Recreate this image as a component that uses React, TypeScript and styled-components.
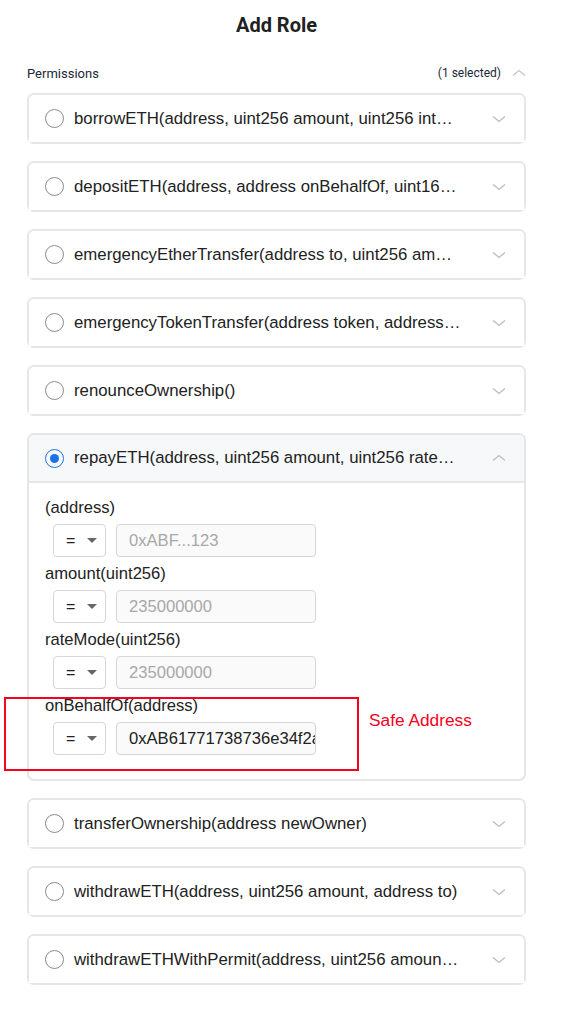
import { FC } from 'react';
import styled, { createGlobalStyle } from 'styled-components';

const Global = createGlobalStyle`
  body {
    margin: 0;
    background: #ffffff;
    font-family: "Liberation Sans", Arial, sans-serif;
  }
`;

const Page = styled.div`
  position: relative;
  width: 499px;
  padding: 0 35px 40px 27px;
`;

const Title = styled.h1`
  margin: 0;
  padding-top: 12px;
  height: 38px;
  text-align: center;
  font-family: Roboto, "Liberation Sans", sans-serif;
  font-size: 20px;
  font-weight: 700;
  color: #212121;
  line-height: 26px;
`;

const SectionHead = styled.div`
  display: flex;
  align-items: center;
  justify-content: space-between;
  height: 40px;
  padding-top: 3px;
  font-family: Roboto, "Liberation Sans", sans-serif;
  color: #1b2836;
`;

const SectionTitle = styled.div`
  font-size: 13px;
`;

const Selected = styled.div`
  display: flex;
  align-items: center;
  gap: 11px;
  font-size: 12px;
`;

const List = styled.div`
  display: flex;
  flex-direction: column;
  gap: 17px;
`;

const Card = styled.div`
  border: 2px solid #e6e6e6;
  border-radius: 7px;
  background: #fff;
`;

const Header = styled.div<{ $open?: boolean }>`
  display: flex;
  align-items: center;
  height: ${(p) => (p.$open ? '46px' : '47px')};
  padding: 0 18px 0 16px;
  background: ${(p) => (p.$open ? '#f7f8fa' : '#fff')};
  border-bottom: ${(p) => (p.$open ? '2px solid #e6e6e6' : 'none')};
  border-radius: 5px 5px 0 0;
`;

const Radio = styled.span<{ $on?: boolean }>`
  display: flex;
  align-items: center;
  justify-content: center;
  flex: none;
  width: 17px;
  height: 17px;
  border-radius: 50%;
  border: 1px solid ${(p) => (p.$on ? '#1a73e8' : '#8a8a8a')};
  margin-right: 10px;

  &::after {
    content: '';
    display: ${(p) => (p.$on ? 'block' : 'none')};
    width: 9px;
    height: 9px;
    border-radius: 50%;
    background: #1a73e8;
  }
`;

const Name = styled.div`
  width: 387px;
  overflow: hidden;
  white-space: nowrap;
  text-overflow: ellipsis;
  font-size: 16.8px;
  color: #222;
`;

const Chevron = styled.span<{ $light?: boolean }>`
  margin-left: auto;
  display: flex;
  color: ${(p) => (p.$light ? '#c4c4c4' : '#bdbdbd')};
`;

const Body = styled.div`
  display: flex;
  flex-direction: column;
  padding: 14px 16px 18px;
`;

const Field = styled.div`
  display: flex;
  flex-direction: column;
`;

const Label = styled.div`
  font-size: 16.6px;
  line-height: 22px;
  color: #222;
  margin-bottom: 5px;
`;

const Controls = styled.div`
  display: flex;
  gap: 10px;
  padding-left: 8px;
  margin-bottom: 6px;
`;

const Select = styled.div`
  display: flex;
  align-items: center;
  justify-content: space-between;
  box-sizing: border-box;
  width: 53px;
  height: 33px;
  padding: 0 8px 0 12px;
  border: 1px solid #d6d6d6;
  border-radius: 4px;
  font-size: 16px;
  color: #222;
`;

const Caret = styled.span`
  width: 0;
  height: 0;
  border-left: 5px solid transparent;
  border-right: 5px solid transparent;
  border-top: 5px solid #666;
`;

const Input = styled.div<{ $filled?: boolean }>`
  box-sizing: border-box;
  width: 200px;
  height: 33px;
  padding: 0 12px;
  border: 1px solid #d6d6d6;
  border-radius: 4px;
  background: #fafafa;
  font-size: 16.6px;
  line-height: 31px;
  white-space: nowrap;
  overflow: hidden;
  color: ${(p) => (p.$filled ? '#222' : '#a8a8a8')};
`;

const Highlight = styled.div`
  position: absolute;
  left: 4px;
  top: 697px;
  width: 351px;
  height: 70px;
  border: 2px solid #f5001e;
`;

const Note = styled.div`
  position: absolute;
  left: 369px;
  top: 710px;
  font-size: 17.3px;
  color: #f5001e;
`;

const ChevronDown: FC = () => (
  <svg width="14" height="8" viewBox="0 0 14 8" fill="none">
    <path d="M1 1.5 L7 6.5 L13 1.5" stroke="currentColor" strokeWidth="1.3" />
  </svg>
);

const ChevronUp: FC = () => (
  <svg width="14" height="8" viewBox="0 0 14 8" fill="none">
    <path d="M1 6.5 L7 1.5 L13 6.5" stroke="currentColor" strokeWidth="1.3" />
  </svg>
);

const methods = [
  'borrowETH(address, uint256 amount, uint256 interestRateMode, uint16 referralCode)',
  'depositETH(address, address onBehalfOf, uint16 referralCode)',
  'emergencyEtherTransfer(address to, uint256 amount)',
  'emergencyTokenTransfer(address token, address to, uint256 amount)',
  'renounceOwnership()',
];

const after = [
  'transferOwnership(address newOwner)',
  'withdrawETH(address, uint256 amount, address to)',
  'withdrawETHWithPermit(address, uint256 amount, uint256 deadline, uint8 permitV)',
];

const params = [
  { label: '(address)', value: '0xABF...123', filled: false },
  { label: 'amount(uint256)', value: '235000000', filled: false },
  { label: 'rateMode(uint256)', value: '235000000', filled: false },
  { label: 'onBehalfOf(address)', value: '0xAB61771738736e34f2a1', filled: true },
];

const MethodRow: FC<{ name: string }> = ({ name }) => (
  <Card>
    <Header>
      <Radio />
      <Name>{name}</Name>
      <Chevron>
        <ChevronDown />
      </Chevron>
    </Header>
  </Card>
);

export default function App() {
  return (
    <>
      <Global />
      <Page>
        <Title>Add Role</Title>
        <SectionHead>
          <SectionTitle>Permissions</SectionTitle>
          <Selected>
            (1 selected)
            <Chevron $light>
              <ChevronUp />
            </Chevron>
          </Selected>
        </SectionHead>
        <List>
          {methods.map((m) => (
            <MethodRow key={m} name={m} />
          ))}
          <Card>
            <Header $open>
              <Radio $on />
              <Name>
                repayETH(address, uint256 amount, uint256 rateMode, address onBehalfOf)
              </Name>
              <Chevron>
                <ChevronUp />
              </Chevron>
            </Header>
            <Body>
              {params.map((p) => (
                <Field key={p.label}>
                  <Label>{p.label}</Label>
                  <Controls>
                    <Select>
                      = <Caret />
                    </Select>
                    <Input $filled={p.filled}>{p.value}</Input>
                  </Controls>
                </Field>
              ))}
            </Body>
          </Card>
          {after.map((m) => (
            <MethodRow key={m} name={m} />
          ))}
        </List>
        <Highlight />
        <Note>Safe Address</Note>
      </Page>
    </>
  );
}
